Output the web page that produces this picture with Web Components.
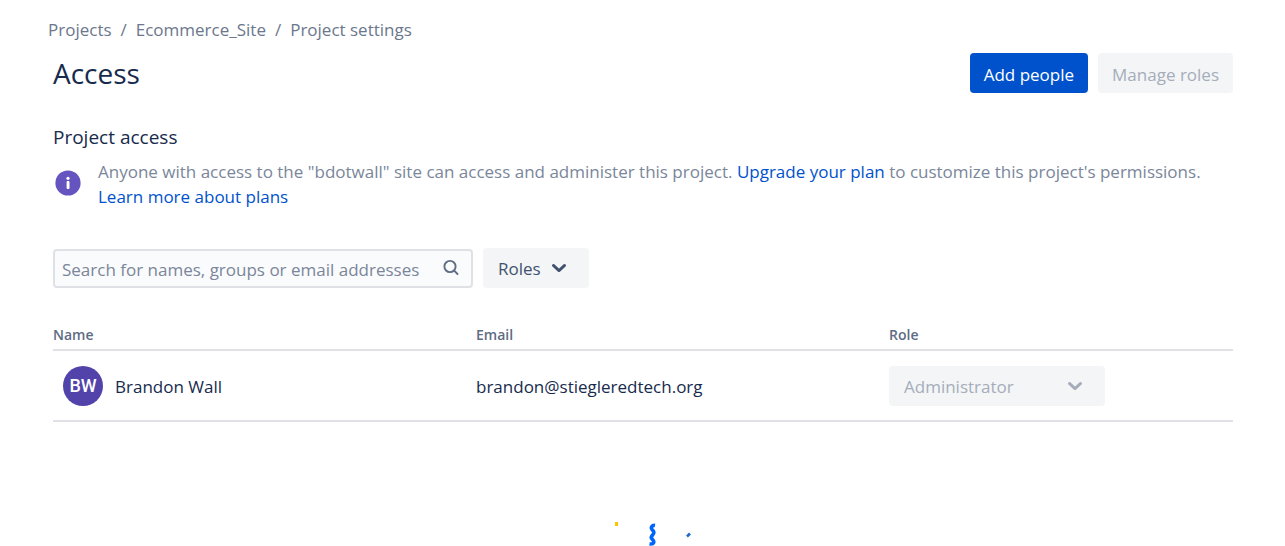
<!DOCTYPE html>
<html lang="en">
<head>
<meta charset="utf-8">
<meta name="viewport" content="width=device-width, initial-scale=1">
<title>Access - Project settings</title>
<style>
  html { overflow-x: hidden; scrollbar-width: none; }
  body {
    margin: 0;
    background: #fff;
    color: #172b4d;
    font: 400 17px/25px "Open Sans", "Noto Sans", sans-serif;
  }
</style>
</head>
<body>
<access-page>
  <crumb-trail slot="crumbs"></crumb-trail>
  <page-header slot="header">Access
    <action-button slot="actions" variant="primary">Add people</action-button>
    <action-button slot="actions" disabled>Manage roles</action-button>
  </page-header>
  <info-notice heading="Project access">
    Anyone with access to the "bdotwall" site can access and administer this project.
    <text-link href="#upgrade">Upgrade your plan</text-link> to customize this project's permissions.
    <text-link slot="more" href="#plans">Learn more about plans</text-link>
  </info-notice>
  <filter-bar></filter-bar>
  <people-table></people-table>
  <confetti-bits></confetti-bits>
</access-page>

<script>
const define = (name, html, setup) => {
  const template = document.createElement('template');
  template.innerHTML = html;
  customElements.define(name, class extends HTMLElement {
    constructor() {
      super();
      this.attachShadow({ mode: 'open' }).append(template.content.cloneNode(true));
    }
    connectedCallback() { if (setup) setup(this, this.shadowRoot); }
  });
};

define('access-page', `
  <style>
    :host { display: block; padding: 17px 52px 0 53px; }
    .crumbs { margin-left: -5px; }
    main { display: flex; flex-direction: column; }
  </style>
  <nav class="crumbs" aria-label="Breadcrumb"><slot name="crumbs"></slot></nav>
  <slot name="header"></slot>
  <main><slot></slot></main>`);

define('crumb-trail', `
  <style>
    :host { display: block; color: #6b778c; }
    ol { display: flex; margin: 0; padding: 0; list-style: none; }
    li + li::before { content: "/"; padding: 0 9px; }
    a { color: inherit; text-decoration: none; }
  </style>
  <ol>
    <li><a href="#projects">Projects</a></li>
    <li><a href="#site">Ecommerce_Site</a></li>
    <li><a href="#settings">Project settings</a></li>
  </ol>`);

define('page-header', `
  <style>
    :host { display: flex; justify-content: space-between; align-items: center; margin-top: 11px; }
    h1 { margin: 0; font-size: 28px; line-height: 40px; font-weight: 400; }
    div { display: flex; gap: 10px; }
  </style>
  <h1><slot></slot></h1>
  <div><slot name="actions"></slot></div>`);

define('action-button', `
  <style>
    :host { display: block; }
    button {
      display: block; height: 40px; padding: 2px 14px 0; border: 0; border-radius: 4px;
      background: #f4f5f7; color: #a5adba; font: inherit; white-space: nowrap;
    }
    :host([variant="primary"]) button { background: #0052cc; color: #fff; }
  </style>
  <button type="button"><slot></slot></button>`,
  (el, root) => { root.querySelector('button').disabled = el.hasAttribute('disabled'); });

define('text-link', `
  <style>
    :host { display: inline; }
    a { color: #0052cc; text-decoration: none; }
  </style>
  <a><slot></slot></a>`,
  (el, root) => { root.querySelector('a').href = el.getAttribute('href'); });

define('info-notice', `
  <style>
    :host { display: block; margin-top: 32px; }
    h2 { margin: 0 0 9px; font-size: 19px; line-height: 25px; font-weight: 400; }
    .row { display: flex; gap: 17px; color: #7a869a; }
    svg { flex: none; width: 26px; height: 26px; margin: 11px 0 0 2px; }
    p { margin: 0; }
    ::slotted([slot="more"]) { display: block; }
  </style>
  <h2></h2>
  <div class="row">
    <svg viewBox="0 0 26 26" aria-hidden="true">
      <circle cx="13" cy="13" r="12.6" fill="#6554c0"/>
      <circle cx="13" cy="8.3" r="1.6" fill="#fff"/>
      <rect x="11.6" y="11" width="2.9" height="8" rx="1" fill="#fff"/>
    </svg>
    <p><slot></slot><slot name="more"></slot></p>
  </div>`,
  (el, root) => { root.querySelector('h2').textContent = el.getAttribute('heading'); });

define('role-select', `
  <style>
    :host { display: block; }
    .box { display: grid; align-items: center; }
    select, svg { grid-area: 1 / 1; }
    select {
      appearance: none; width: 100%; height: 40px; margin: 0; padding: 0 15px; border: 0;
      border-radius: 4px; background: #f4f5f7; color: #42526e; font: inherit; opacity: 1;
    }
    svg { justify-self: end; width: 16px; height: 12px; margin-right: 22px; color: #42526e; pointer-events: none; }
    select:disabled, select:disabled + svg { color: #a5adba; }
  </style>
  <div class="box">
    <select><option></option></select>
    <svg viewBox="0 0 16 12" aria-hidden="true">
      <path d="M2.4 3.4 8 8.600l5.600-5.200" fill="none" stroke="currentColor" stroke-width="2.800" stroke-linecap="round" stroke-linejoin="round"/>
    </svg>
  </div>`,
  (el, root) => {
    const select = root.querySelector('select');
    select.options[0].textContent = el.getAttribute('value');
    select.setAttribute('aria-label', el.getAttribute('label'));
    select.disabled = el.hasAttribute('disabled');
  });

define('filter-bar', `
  <style>
    :host { display: flex; align-items: center; gap: 10px; margin-top: 39px; }
    label {
      display: flex; align-items: center; box-sizing: border-box; width: 420px; height: 39px;
      padding: 0 12px 0 7px; border: 2px solid #dfe1e6; border-radius: 4px; background: #fafbfc;
    }
    input {
      flex: 1; min-width: 0; height: 25px; padding: 2px 0 0; border: 0; outline: 0;
      background: none; color: inherit; font: inherit;
    }
    input::placeholder { color: #7a869a; opacity: 1; }
    svg { flex: none; width: 16px; height: 18px; }
    role-select { width: 106px; }
  </style>
  <label>
    <input type="search" aria-label="Search people" placeholder="Search for names, groups or email addresses">
    <svg viewBox="0 0 16 18" fill="none" stroke="#5e6c84" stroke-width="1.9" stroke-linecap="round" aria-hidden="true">
      <circle cx="7" cy="7.5" r="5.6"/><path d="m11.2 11.700 3.300 3.300"/>
    </svg>
  </label>
  <role-select value="Roles" label="Filter by role"></role-select>`);

define('user-avatar', `
  <style>
    :host {
      display: grid; place-items: center; width: 40px; height: 40px; border-radius: 50%;
      background: #5243aa; color: #fff; font: 500 18px/20px Roboto, sans-serif;
    }
  </style>
  <slot></slot>`);

define('people-table', `
  <style>
    :host { display: block; margin-top: 34px; }
    table { width: 100%; table-layout: fixed; border-collapse: separate; border-spacing: 0; }
    col.name { width: 35.85%; }
    col.email { width: 35%; }
    th, td { padding: 0; text-align: left; border-bottom: 2px solid #dfe1e6; }
    th { padding-bottom: 2px; font-size: 14px; line-height: 25px; font-weight: 600; color: #5e6c84; }
    td { padding: 15px 0 14px; }
    .user { display: flex; align-items: center; gap: 12px; padding-left: 10px; }
    role-select { width: 216px; }
  </style>
  <table>
    <colgroup><col class="name"><col class="email"><col></colgroup>
    <thead><tr><th scope="col">Name</th><th scope="col">Email</th><th scope="col">Role</th></tr></thead>
    <tbody><tr>
      <td><div class="user"><user-avatar>BW</user-avatar><span>Brandon Wall</span></div></td>
      <td>brandon@stiegleredtech.org</td>
      <td><role-select value="Administrator" label="Role of Brandon Wall" disabled></role-select></td>
    </tr></tbody>
  </table>`);

define('confetti-bits', `
  <style>
    :host { display: flex; justify-content: center; margin-top: 98px; }
    svg { width: 100px; height: 26px; margin-left: 18px; }
  </style>
  <svg viewBox="0 0 100 26" aria-hidden="true">
    <rect x="13" y="2" width="3" height="4" fill="#ffc400"/>
    <path d="M53 5.500C50 5 48.500 7.500 50 9.500S53 12 51 14.500 48.500 17.500 50.500 19.500 52.500 24.500 47.500 24" fill="none" stroke="#0065ff" stroke-width="3.600"/>
    <path d="m85 16.500 3-3" stroke="#2068d0" stroke-width="2.600"/>
  </svg>`);
</script>
</body>
</html>
